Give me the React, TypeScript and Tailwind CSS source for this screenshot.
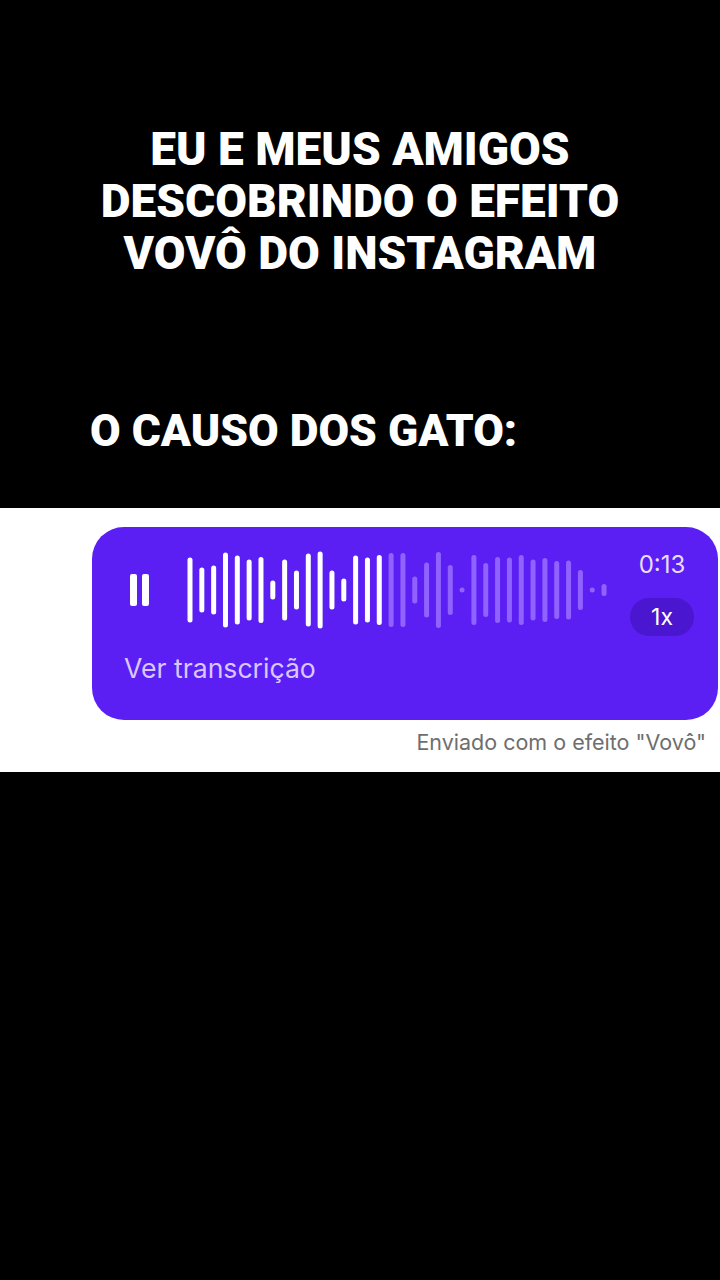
import React from "react";

const played = [65, 45, 49, 75, 69, 61, 66, 19, 61, 39, 73, 77, 39, 23, 69, 65, 70];
const rest = [74, 74, 27, 55, 76, 50, 5, 70, 54, 66, 65, 70, 61, 64, 58, 59, 40, 5, 12];

function Waveform() {
  const all = [...played.map((h) => ({ h, on: true })), ...rest.map((h) => ({ h, on: false }))];
  return (
    <svg width="424" height="80" viewBox="0 0 424 80" className="shrink-0">
      {all.map((b, i) => {
        const cx = 3 + i * 11.83;
        return (
          <rect
            key={i}
            x={cx - 2.5}
            y={40 - b.h / 2}
            width={5}
            height={b.h}
            rx={2.5}
            fill={b.on ? "#ffffff" : "#9062ff"}
          />
        );
      })}
    </svg>
  );
}

export default function App() {
  return (
    <div
      className="w-[720px] h-[1280px] bg-black flex flex-col"
      style={{ fontFamily: "Roboto, 'Liberation Sans', sans-serif" }}
    >
      <div className="h-[508px] shrink-0 flex flex-col text-white font-black text-[46px] leading-[52px]">
        <div className="mt-[123px] text-center">
          EU E MEUS AMIGOS
          <br />
          DESCOBRINDO O EFEITO
          <br />
          VOVÔ DO INSTAGRAM
        </div>
        <div className="mt-[126px] pl-[90px] text-[44.4px]">O CAUSO DOS GATO:</div>
      </div>
      <div className="h-[264px] shrink-0 bg-white flex flex-col" style={{ fontFamily: "Inter, 'Noto Sans', sans-serif" }}>
        <div className="mt-[19px] ml-[92px] mr-[2px] rounded-[32px] bg-[#5b1ff4] pl-[32px] pr-[24px] pt-[23px] pb-[36px] flex flex-col">
          <div className="flex h-[80px] items-center">
            <div className="ml-[6px] flex gap-[5px] shrink-0">
              <div className="w-[7px] h-[32px] rounded-[2px] bg-white" />
              <div className="w-[7px] h-[32px] rounded-[2px] bg-white" />
            </div>
            <div className="ml-[38px]">
              <Waveform />
            </div>
            <div className="ml-auto self-start mt-[1px] w-[64px] flex flex-col items-center">
              <div className="text-[24px] leading-[28px] text-[#e9ddff]">0:13</div>
              <div className="mt-[19px] w-[64px] h-[38px] rounded-full bg-[#4a16cf] flex items-center justify-center text-white text-[23px]">
                1x
              </div>
            </div>
          </div>
          <div className="mt-[23px] text-[26.6px] leading-[31px] text-[#d9c7ff]">Ver transcrição</div>
        </div>
        <div className="mt-[9px] pr-[14px] text-right text-[21.5px] leading-[26px] text-[#6e6e6e]">
          Enviado com o efeito "Vovô"
        </div>
      </div>
      <div className="flex-1 bg-black" />
    </div>
  );
}
